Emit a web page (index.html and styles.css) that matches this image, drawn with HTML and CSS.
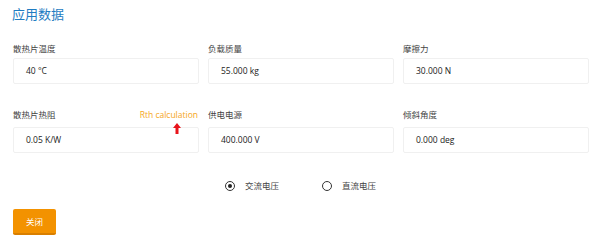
FILE: index.html
```html
<!DOCTYPE html>
<html lang="zh">
<head>
<meta charset="utf-8">
<link rel="stylesheet" href="styles.css">
</head>
<body>
<div class="panel">
  <h2 class="title">应用数据</h2>
  <div class="grid">
    <div class="field">
      <div class="label">散热片温度</div>
      <div class="box">40 °C</div>
    </div>
    <div class="field">
      <div class="label">负载质量</div>
      <div class="box">55.000 kg</div>
    </div>
    <div class="field">
      <div class="label">摩擦力</div>
      <div class="box">30.000 N</div>
    </div>
    <div class="field">
      <div class="label label-row"><span>散热片热阻</span><span class="link">Rth calculation</span></div>
      <div class="box">0.05 K/W</div>
      <svg class="arrow" width="8" height="11" viewBox="0 0 8 11"><path d="M4 0 L8 5 L5.5 5 L5.5 11 L2.5 11 L2.5 5 L0 5 Z" fill="#e8141b"/></svg>
    </div>
    <div class="field">
      <div class="label label-row">供电电源</div>
      <div class="box">400.000 V</div>
    </div>
    <div class="field">
      <div class="label label-row">倾斜角度</div>
      <div class="box">0.000 deg</div>
    </div>
  </div>
  <div class="radios">
    <label class="radio"><span class="dot checked"></span>交流电压</label>
    <label class="radio"><span class="dot"></span>直流电压</label>
  </div>
  <button class="btn">关闭</button>
</div>
</body>
</html>
```
FILE: styles.css
```css
* { box-sizing: border-box; }
body {
  margin: 0;
  background: #fff;
  font-family: "Open Sans", "Noto Sans CJK SC", sans-serif;
  color: #333;
}
.panel { padding: 5px 11px 0 13px; }
.title {
  margin: 0 0 0 -1px;
  font-size: 13px;
  font-weight: normal;
  color: #1f7cc2;
  line-height: 18px;
}
.grid {
  margin-top: 20px;
  display: grid;
  grid-template-columns: repeat(3, 186px);
  column-gap: 9px;
  row-gap: 25px;
}
.field { position: relative; }
.label {
  font-size: 8.5px;
  line-height: 12px;
  height: 12px;
  margin-bottom: 3px;
  color: #444;
}
.label-row {
  display: flex;
  justify-content: space-between;
  align-items: flex-start;
  height: 14px;
  margin-bottom: 4px;
}
.link { color: #f5a623; margin-right: 1px; }
.box {
  height: 26px;
  border: 1px solid #f0f0f0;
  border-radius: 2px;
  padding: 0 12px;
  font-size: 8.5px;
  line-height: 24px;
  color: #222;
}
.arrow { position: absolute; left: 160px; top: 14px; }
.radios {
  margin-top: 27px;
  display: flex;
  gap: 43px;
  padding-left: 212px;
}
.radio {
  display: flex;
  align-items: center;
  font-size: 8.5px;
  color: #444;
  line-height: 12px;
}
.dot {
  width: 10px;
  height: 10px;
  border: 1.5px solid #333;
  border-radius: 50%;
  margin-right: 10px;
  position: relative;
}
.dot.checked::after {
  content: "";
  position: absolute;
  left: 1.5px; top: 1.5px;
  width: 4px; height: 4px;
  border-radius: 50%;
  background: #222;
}
.btn {
  display: block;
  margin-top: 17px;
  width: 43px;
  height: 26px;
  background: #f39200;
  border: none;
  border-bottom: 2px solid #d97f00;
  border-radius: 2px;
  color: #fff;
  font-family: inherit;
  font-size: 8.5px;
  padding: 0;
}
```
